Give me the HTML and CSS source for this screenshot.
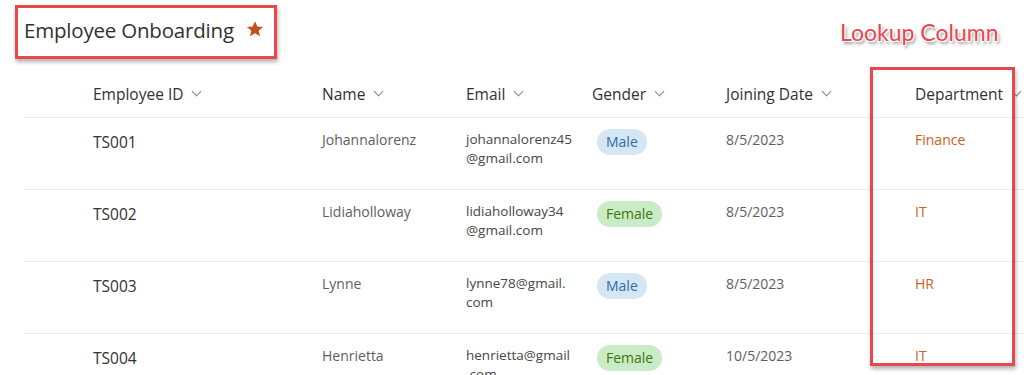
FILE: index.html
```html
<!DOCTYPE html>
<html lang="en">
<head>
    <meta charset="UTF-8">
    <title>Employee Onboarding</title>
    <link rel="stylesheet" href="styles.css">
</head>
<body>
    <div class="page">
        <div class="title-box">
            <h1>Employee Onboarding</h1>
            <svg class="star" width="18" height="18" viewBox="0 0 24 24"><path d="M12 1.5l3.1 7.1 7.7.6-5.9 5.1 1.8 7.5L12 17.8l-6.7 4 1.8-7.5-5.9-5.1 7.7-.6z" fill="#c4501b"/></svg>
        </div>

        <div class="list">
            <div class="row head">
                <div></div>
                <div class="th">Employee ID <span class="chev"></span></div>
                <div class="th">Name <span class="chev"></span></div>
                <div class="th">Email <span class="chev"></span></div>
                <div class="th">Gender <span class="chev"></span></div>
                <div class="th">Joining Date <span class="chev"></span></div>
                <div class="th">Department <span class="chev"></span></div>
            </div>

            <div class="row">
                <div></div>
                <div class="id">TS001</div>
                <div class="name">Johannalorenz</div>
                <div class="mail">johannalorenz45<br>@gmail.com</div>
                <div><span class="pill male">Male</span></div>
                <div class="date">8/5/2023</div>
                <div class="dept">Finance</div>
            </div>
            <div class="row">
                <div></div>
                <div class="id">TS002</div>
                <div class="name">Lidiaholloway</div>
                <div class="mail">lidiaholloway34<br>@gmail.com</div>
                <div><span class="pill female">Female</span></div>
                <div class="date">8/5/2023</div>
                <div class="dept">IT</div>
            </div>
            <div class="row">
                <div></div>
                <div class="id">TS003</div>
                <div class="name">Lynne</div>
                <div class="mail">lynne78@gmail.<br>com</div>
                <div><span class="pill male">Male</span></div>
                <div class="date">8/5/2023</div>
                <div class="dept">HR</div>
            </div>
            <div class="row">
                <div></div>
                <div class="id">TS004</div>
                <div class="name">Henrietta</div>
                <div class="mail">henrietta@gmail<br>.com</div>
                <div><span class="pill female">Female</span></div>
                <div class="date">10/5/2023</div>
                <div class="dept">IT</div>
            </div>
        </div>

        <!-- annotations drawn over the screenshot -->
        <div class="note">Lookup Column</div>
        <div class="mark"></div>
    </div>
</body>
</html>
```

FILE: styles.css
```css
* {
    margin: 0;
    padding: 0;
    box-sizing: border-box;
}

body {
    font-family: 'Open Sans', 'Noto Sans', sans-serif;
    background: white;
    color: #323130;
    overflow: hidden;
}

.page {
    position: relative;
    width: 1024px;
    height: 375px;
    overflow: hidden;
}

.title-box {
    display: inline-flex;
    align-items: center;
    gap: 12px;
    margin: 5px 0 0 15px;
    width: 262px;
    height: 54px;
    padding: 0 0 5px 6px;
    border: 3px solid #e8474c;
    box-shadow: 1px 3px 4px rgba(0,0,0,0.3);
}

.title-box h1 {
    font-size: 20.5px;
    font-weight: 400;
    color: #323130;
    letter-spacing: -0.2px;
}

.star {
    margin-top: -2px;
}

.list {
    margin: 11px 0 0 24px;
}

.row {
    display: grid;
    grid-template-columns: 69px 229px 144px 126px 134px 189px 1fr;
    height: 72px;
    padding-top: 12px;
    border-bottom: 1px solid #edebe9;
    font-size: 14px;
    line-height: 19px;
}

.row.head {
    height: 48px;
    padding-top: 13px;
    font-size: 15.5px;
    line-height: 22px;
}

.th {
    color: #323130;
    white-space: nowrap;
}

.chev {
    display: inline-block;
    width: 7px;
    height: 7px;
    margin: 0 0 5px 6px;
    border-right: 1px solid #8a8886;
    border-bottom: 1px solid #8a8886;
    transform: rotate(45deg);
}

.id {
    font-size: 15.5px;
    line-height: 22px;
    padding-top: 1px;
}

.name {
    color: #605e5c;
}

.mail {
    color: #484644;
    font-size: 13.5px;
}

.pill {
    display: inline-block;
    margin-left: 5px;
    padding: 0 9px;
    height: 26px;
    line-height: 26px;
    border-radius: 13px;
    font-size: 14px;
    margin-top: -1px;
}

.male {
    background: #d5e6f5;
    color: #2e6cab;
}

.female {
    background: #c9ecc6;
    color: #437406;
}

.date {
    color: #605e5c;
}

.dept {
    color: #cd5f22;
}

.note {
    position: absolute;
    left: 840px;
    top: 18px;
    font-family: 'Lato', sans-serif;
    font-size: 23px;
    color: #ea4550;
    text-shadow: -1px -1px 0 #fff, 1px -1px 0 #fff, -1px 1px 0 #fff, 1px 1px 0 #fff, 2px 3px 3px rgba(0,0,0,0.45);
}

.mark {
    position: absolute;
    left: 870px;
    top: 67px;
    width: 145px;
    height: 299px;
    border: 3px solid #e8474c;
    box-shadow: 1px 3px 4px rgba(0,0,0,0.3);
}
```
